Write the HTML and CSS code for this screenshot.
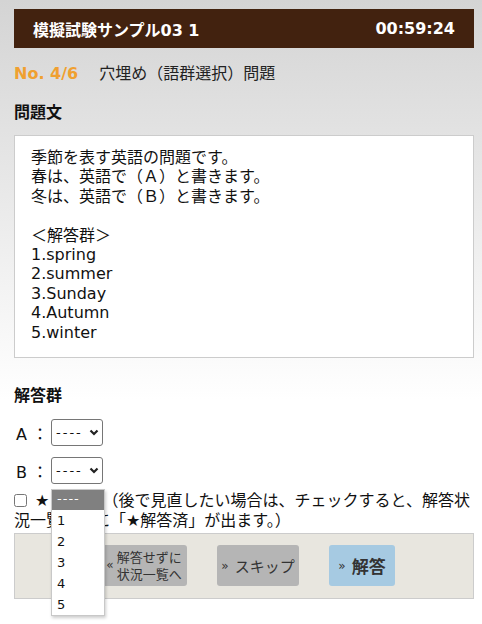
FILE: index.html
```html
<!DOCTYPE html>
<html lang="ja">
<head>
<meta charset="utf-8">
<title>模擬試験サンプル03 1</title>
<link rel="stylesheet" href="styles.css">
</head>
<body>
<div class="page">
  <header class="topbar">
    <span class="title">模擬試験サンプル03 1</span>
    <span class="timer">00:59:24</span>
  </header>

  <div class="qhead">
    <span class="qno">No. 4/6</span>
    <span class="qtype">穴埋め（語群選択）問題</span>
  </div>

  <h2 class="label">問題文</h2>
  <div class="qbox">
    <p>季節を表す英語の問題です。<br>春は、英語で（Ａ）と書きます。<br>冬は、英語で（Ｂ）と書きます。<br><br>＜解答群＞<br>1.spring<br>2.summer<br>3.Sunday<br>4.Autumn<br>5.winter</p>
  </div>

  <h2 class="label label-ans">解答群</h2>
  <div class="ansrow">
    <span class="alabel">A ：</span>
    <span class="sel">
      <select class="selbox"><option>----</option><option>1</option><option>2</option><option>3</option><option>4</option><option>5</option></select>
      <svg class="chev" width="10" height="7" viewBox="0 0 10 7"><path d="M1.5 1.5 L5 5 L8.5 1.5" fill="none" stroke="#222" stroke-width="2.2"/></svg>
    </span>
  </div>
  <div class="ansrow ansrow-b">
    <span class="alabel">B ：</span>
    <span class="sel">
      <select class="selbox"><option>----</option><option>1</option><option>2</option><option>3</option><option>4</option><option>5</option></select>
      <svg class="chev" width="10" height="7" viewBox="0 0 10 7"><path d="M1.5 1.5 L5 5 L8.5 1.5" fill="none" stroke="#222" stroke-width="2.2"/></svg>
      <ul class="droplist">
        <li class="on">----</li>
        <li>1</li>
        <li>2</li>
        <li>3</li>
        <li>4</li>
        <li>5</li>
      </ul>
    </span>
  </div>

  <p class="check"><input type="checkbox" class="cb"> ★ 見直し（後で見直したい場合は、チェックすると、解答状況一覧画面に「★解答済」が出ます。）</p>

  <div class="btnbox">
    <button class="btn btn-back"><span class="arr">«</span><span class="two">解答せずに<br>状況一覧へ</span></button>
    <button class="btn btn-skip"><span class="arr">»</span> スキップ</button>
    <button class="btn btn-ans"><span class="arr">»</span> 解答</button>
  </div>
</div>
</body>
</html>
```

FILE: styles.css
```css
html, body {
  margin: 0;
  padding: 0;
}
body {
  background: linear-gradient(#d4d4d4 0px, #ffffff 400px) no-repeat;
  background-color: #ffffff;
  min-height: 624px;
  font-family: "DejaVu Sans", "Noto Sans CJK JP", sans-serif;
  font-size: 16px;
  color: #111;
}
.page {
  padding: 9px 8px 0 14px;
}
.topbar {
  height: 39px;
  background: #42220f;
  color: #fff;
  display: flex;
  align-items: center;
  justify-content: space-between;
  padding: 0 19px;
  font-weight: bold;
  font-size: 16px;
}
.qhead {
  margin-top: 16px;
  line-height: 20px;
  display: flex;
  align-items: center;
}
.qno {
  color: #f0a030;
  font-weight: bold;
  margin-right: 21px;
}
.qtype {
  color: #222;
}
.label {
  margin: 19px 0 0 0;
  font-size: 16px;
  font-weight: bold;
  line-height: 20px;
}
.qbox {
  margin-top: 12px;
  background: #fff;
  border: 1px solid #cccccc;
  padding: 12px 16px 15px 16px;
}
.qbox p {
  margin: 0;
  line-height: 19.4px;
}
.label-ans {
  margin-top: 28px;
}
.ansrow {
  margin-top: 13px;
  display: flex;
  align-items: center;
  height: 27px;
}
.ansrow-b {
  margin-top: 11px;
}
.alabel {
  width: 35px;
  padding-left: 2px;
}
.sel {
  position: relative;
  display: inline-flex;
  align-items: center;
  width: 52px;
  height: 27px;
  box-sizing: border-box;
  border: 1px solid #767676;
  border-radius: 3px;
  background: #fff;
}
.selbox {
  appearance: none;
  -webkit-appearance: none;
  border: none;
  background: transparent;
  font-family: "DejaVu Sans", sans-serif;
  font-size: 13px;
  letter-spacing: 2px;
  color: #111;
  padding: 0 0 0 4px;
  margin: 0;
  width: 36px;
  height: 25px;
  outline: none;
}
.chev {
  margin-left: 1px;
}
.droplist {
  position: absolute;
  left: -1px;
  top: 31px;
  width: 52px;
  margin: 0;
  padding: 0;
  list-style: none;
  background: #fff;
  border: 1px solid #c8c8c8;
  box-shadow: 1px 2px 3px rgba(0,0,0,0.2);
  font-family: "DejaVu Sans", sans-serif;
  font-size: 13px;
  z-index: 10;
}
.droplist li {
  height: 21px;
  line-height: 21px;
  padding-left: 5px;
  color: #111;
}
.droplist li.on {
  height: 20px;
  line-height: 18px;
  background: #808080;
  color: #fff;
  letter-spacing: 1px;
}
.check {
  margin: 7px 0 0 0;
  line-height: 20px;
}
.cb {
  margin: 0 3px 0 0;
  width: 13px;
  height: 13px;
  vertical-align: -1px;
}
.btnbox {
  margin-top: 2px;
  background: #e8e6df;
  border: 1px solid #cccccc;
  padding: 11px 0 12px 8px;
  display: flex;
  justify-content: center;
  gap: 30px;
}
.btn {
  box-sizing: border-box;
  border: none;
  border-radius: 3px;
  height: 41px;
  font-family: "DejaVu Sans", "Noto Sans CJK JP", sans-serif;
  color: #333;
  display: flex;
  align-items: center;
  justify-content: center;
  gap: 6px;
  padding: 0;
  white-space: nowrap;
}
.arr {
  font-size: 12px;
}
.btn-back {
  background: #b5b5b5;
  width: 86px;
  font-size: 13px;
  line-height: 17px;
  gap: 3px;
}
.two {
  text-align: center;
}
.btn-skip {
  background: #b5b5b5;
  width: 82px;
  font-size: 15px;
}
.btn-ans {
  background: #a6cae2;
  width: 66px;
  font-size: 17px;
  font-weight: bold;
}
.btn-ans .arr {
  font-weight: normal;
}
```
